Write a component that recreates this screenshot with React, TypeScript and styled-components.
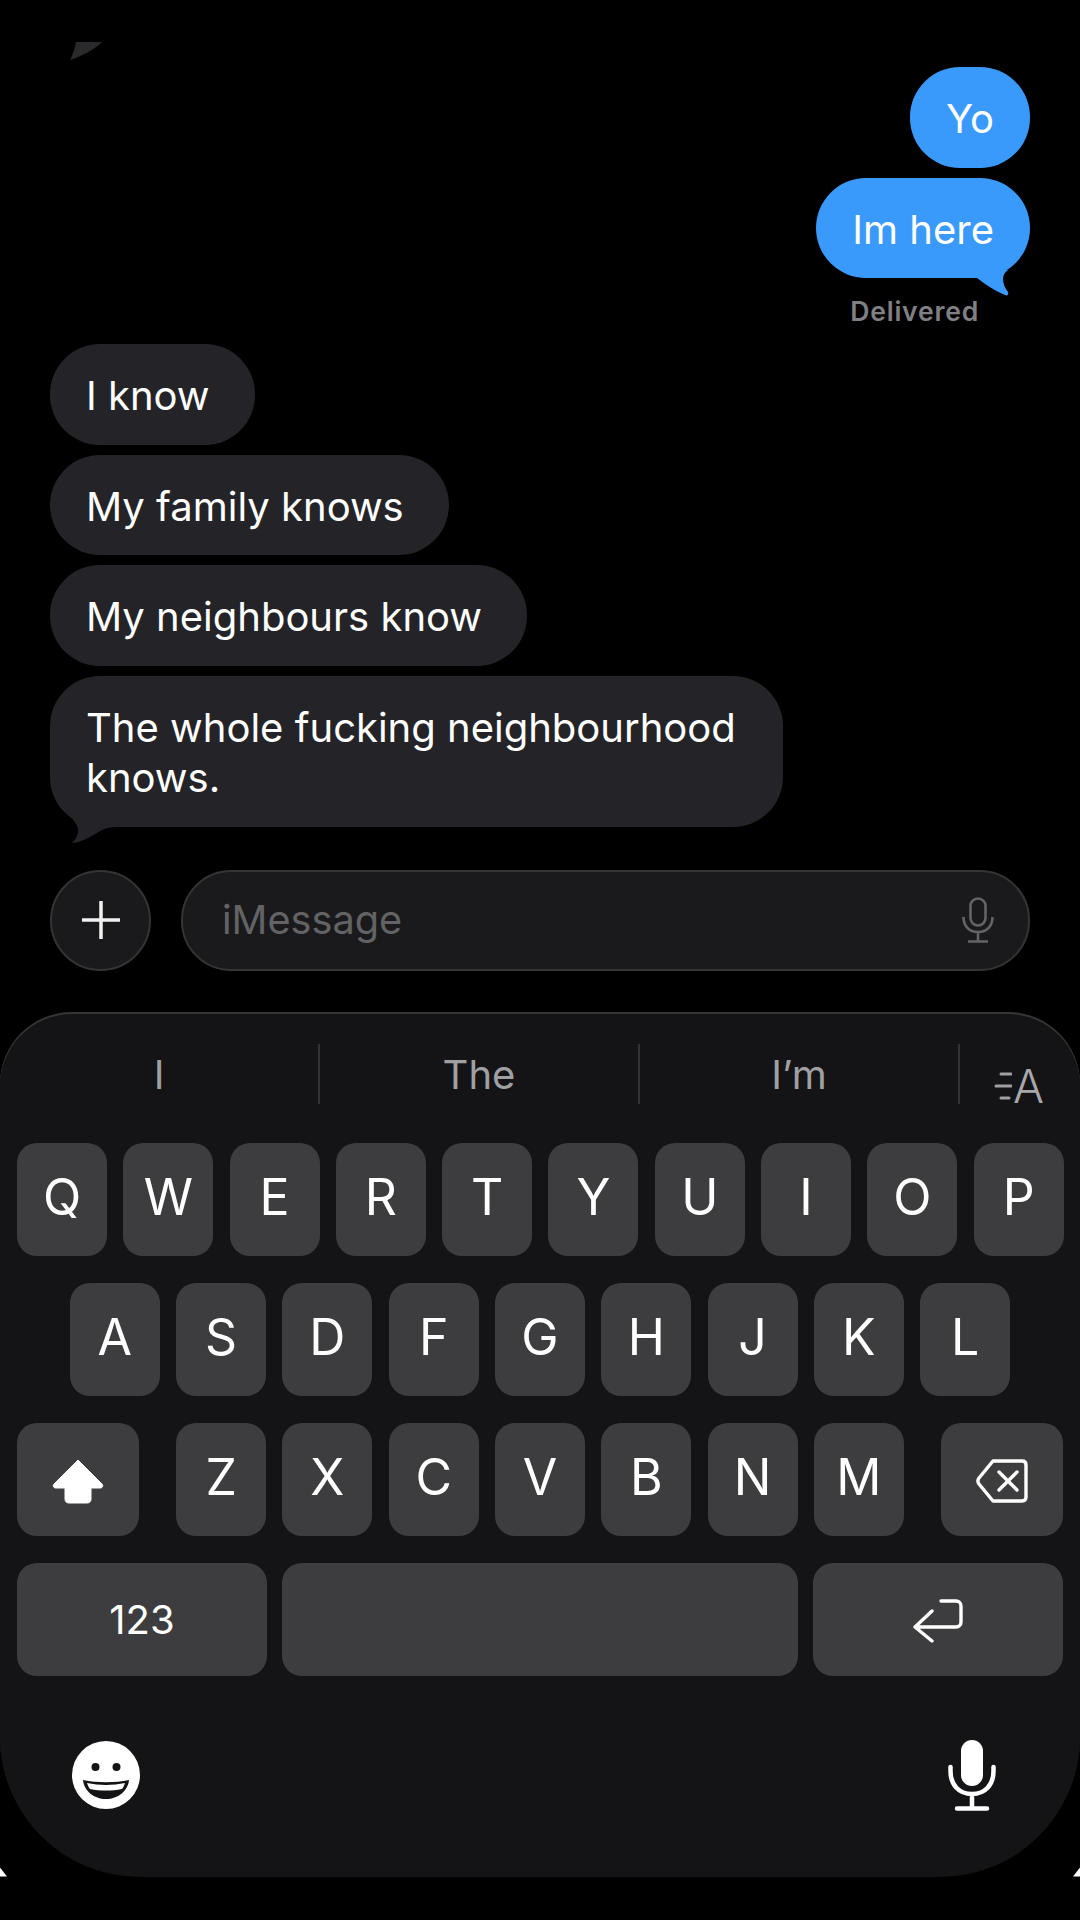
import styled, { createGlobalStyle } from "styled-components";

const GlobalStyle = createGlobalStyle`
  html, body {
    margin: 0;
    background: #000;
  }
  * {
    box-sizing: border-box;
  }
`;

const rows = ["QWERTYUIOP", "ASDFGHJKL", "ZXCVBNM"];

export default function App() {
  return (
    <>
      <GlobalStyle />
      <Screen>
        <CutOffTail viewBox="0 0 32 18">
          <path d="M6 0H32C24 8 10 15 0 18C3 12 5 6 6 0Z" fill="#2a2a2c" />
        </CutOffTail>
        <Thread>
          <Bubble $mine>Yo</Bubble>
          <Bubble $mine>
            Im here
            <MineTail viewBox="0 0 32 26">
              <path
                d="M0 8C8 14 18 21 28 25C30 26 32 25 31 22C28 18 26 14 26 9C26 5 28 2 31 0H0Z"
                fill="#3a9afc"
              />
            </MineTail>
          </Bubble>
          <Delivered>Delivered</Delivered>
          <Bubble>I know</Bubble>
          <Bubble>My family knows</Bubble>
          <Bubble>My neighbours know</Bubble>
          <Bubble>
            The whole fucking neighbourhood knows.
            <TheirTail viewBox="0 0 62 38">
              <path
                d="M12 9C17 15 21 20 20 25C19 30 17 33 14 36C22 36 32 30 44 23C50 20 56 20 62 20V0H12Z"
                fill="#242428"
              />
            </TheirTail>
          </Bubble>
        </Thread>

        <Composer>
          <PlusButton>
            <svg width="40" height="40" viewBox="0 0 40 40">
              <path d="M20 1V39M1 20H39" stroke="#f2f2f2" strokeWidth="3.5" />
            </svg>
          </PlusButton>
          <InputField>
            <Placeholder>iMessage</Placeholder>
            <svg width="32" height="46" viewBox="0 0 32 46" fill="none" stroke="#646466" strokeWidth="2.6">
              <rect x="8.5" y="1.5" width="15" height="27" rx="7.5" />
              <path d="M1.5 20C1.5 29 7 35 16 35S30.5 29 30.5 20M16 35V44M6 44.5H26" />
            </svg>
          </InputField>
        </Composer>

        <Keyboard>
          <Corner $side="left" />
          <Corner $side="right" />
          <Suggestions>
            <Suggestion>I</Suggestion>
            <Suggestion>The</Suggestion>
            <Suggestion>I’m</Suggestion>
            <TextStyle>
              <svg width="18" height="32" viewBox="0 0 18 32">
                <path
                  d="M7 4H17M2 16H17M7 28H15"
                  stroke="#a0a0a3"
                  strokeWidth="3"
                  strokeLinecap="round"
                />
              </svg>
              A
            </TextStyle>
          </Suggestions>
          <KeyRows>
            <KeyRow>
              {rows[0].split("").map((k) => (
                <Key key={k}>{k}</Key>
              ))}
            </KeyRow>
            <KeyRow $center>
              {rows[1].split("").map((k) => (
                <Key key={k}>{k}</Key>
              ))}
            </KeyRow>
            <KeyRow $between>
              <WideKey $width={122}>
                <svg width="52" height="46" viewBox="0 0 52 46">
                  <path
                    d="M26 2L50 26C51.500 28 50.500 30 48 30H39V41C39 43.500 37.500 45 35 45H17C14.500 45 13 43.500 13 41V30H4C1.500 30 .5 28 2 26Z"
                    fill="#fff"
                    stroke="#fff"
                    strokeLinejoin="round"
                  />
                </svg>
              </WideKey>
              <LetterGroup>
                {rows[2].split("").map((k) => (
                  <Key key={k}>{k}</Key>
                ))}
              </LetterGroup>
              <WideKey $width={122}>
                <svg width="52" height="44" viewBox="0 0 52 44" fill="none" stroke="#fff" strokeWidth="3.4" strokeLinejoin="round" strokeLinecap="round">
                  <path d="M17 2H46C48.500 2 50 3.500 50 6V38C50 40.500 48.500 42 46 42H17L3 25C1.500 23 1.500 21 3 19Z" />
                  <path d="M23 13L41 31M41 13L23 31" />
                </svg>
              </WideKey>
            </KeyRow>
            <KeyRow $wide>
              <WideKey $width={250} $text>
                123
              </WideKey>
              <SpaceKey />
              <WideKey $width={250}>
                <svg width="50" height="44" viewBox="0 0 50 44" fill="none" stroke="#fff" strokeWidth="3.4" strokeLinejoin="round" strokeLinecap="round">
                  <path d="M28 2H43C46 2 48 4 48 7V23C48 26 46 28 43 28H3M19 12L2 28L19 42" />
                </svg>
              </WideKey>
            </KeyRow>
          </KeyRows>
          <BottomBar>
            <svg width="68" height="68" viewBox="0 0 68 68">
              <circle cx="34" cy="34" r="34" fill="#fff" />
              <circle cx="23.500" cy="26" r="4" fill="#141416" />
              <circle cx="44.500" cy="26" r="4" fill="#141416" />
              <path d="M11 39C25 42 43 42 57 39C56 50 46 58 34 58S12 50 11 39Z" fill="#141416" />
              <path d="M15 42C27 44.500 41 44.500 53 42C52 45 51 47 50 48C40 50 28 50 18 48C17 47 16 45 15 42Z" fill="#fff" />
            </svg>
            <svg width="48" height="72" viewBox="0 0 48 72" fill="none">
              <rect x="13" y="1" width="22" height="46" rx="11" fill="#fff" />
              <path
                d="M2.500 28V32C2.500 46 11 55 24 55S45.500 46 45.500 32V28M24 55V68M9 69.500H39"
                stroke="#fff"
                strokeWidth="4.500"
                strokeLinecap="round"
              />
            </svg>
          </BottomBar>
        </Keyboard>
      </Screen>
    </>
  );
}

const Screen = styled.div`
  position: relative;
  width: 1080px;
  height: 1920px;
  background: #000;
  overflow: hidden;
  padding-top: 67px;
  font-family: Inter, Roboto, "Liberation Sans", sans-serif;
  color: #fff;
`;

const CutOffTail = styled.svg`
  position: absolute;
  left: 70px;
  top: 42px;
  width: 32px;
  height: 18px;
`;

const Thread = styled.div`
  display: flex;
  flex-direction: column;
  align-items: flex-start;
  gap: 10px;
  padding: 0 50px;
`;

const Bubble = styled.div<{ $mine?: boolean }>`
  position: relative;
  align-self: ${(p) => (p.$mine ? "flex-end" : "flex-start")};
  max-width: 733px;
  padding: 27px ${(p) => (p.$mine ? 36 : 45)}px 23px 36px;
  border-radius: 50px;
  background: ${(p) => (p.$mine ? "#3a9afc" : "#242428")};
  font-size: 40px;
  line-height: 50.5px;
`;

const MineTail = styled.svg`
  position: absolute;
  right: 21px;
  bottom: -18px;
  width: 32px;
  height: 26px;
`;

const TheirTail = styled.svg`
  position: absolute;
  left: 8px;
  bottom: -18px;
  width: 62px;
  height: 38px;
`;

const Delivered = styled.div`
  align-self: flex-end;
  height: 46px;
  margin-right: 51px;
  padding-top: 5px;
  font-size: 26.5px;
  line-height: 36px;
  font-weight: 600;
  letter-spacing: 0.8px;
  color: #808084;
`;

const Composer = styled.div`
  display: flex;
  gap: 30px;
  margin-top: 43px;
  padding: 0 50px;
`;

const PlusButton = styled.div`
  display: flex;
  flex: none;
  align-items: center;
  justify-content: center;
  width: 101px;
  height: 101px;
  border: 2px solid #343436;
  border-radius: 50%;
  background: #1a1a1c;
`;

const InputField = styled.div`
  display: flex;
  flex: 1;
  align-items: center;
  justify-content: space-between;
  height: 101px;
  padding: 0 34px 0 39px;
  border: 2px solid #343436;
  border-radius: 50px;
  background: #1a1a1c;
`;

const Placeholder = styled.span`
  font-size: 39.7px;
  color: #636366;
`;

const Keyboard = styled.div`
  position: relative;
  height: 865px;
  margin-top: 41px;
  padding-top: 32px;
  border-radius: 72px 72px 140px 140px;
  background: #141416;
  box-shadow: inset 0 2px 0 #363638;
`;

const Corner = styled.span<{ $side: "left" | "right" }>`
  position: absolute;
  bottom: 0;
  ${(p) => p.$side}: 0;
  width: 7px;
  height: 9px;
  background: #fff;
  clip-path: ${(p) =>
    p.$side === "left"
      ? "polygon(0 0, 100% 100%, 0 100%)"
      : "polygon(100% 0, 100% 100%, 0 100%)"};
`;

const Suggestions = styled.div`
  display: grid;
  grid-template-columns: 320px 320px 320px 1fr;
  height: 60px;
`;

const Suggestion = styled.div`
  display: flex;
  align-items: center;
  justify-content: center;
  padding-top: 2px;
  border-right: 2px solid #333335;
  font-size: 40px;
  color: #a0a0a3;
`;

const TextStyle = styled.div`
  display: flex;
  align-items: center;
  gap: 1px;
  padding: 24px 0 0 34px;
  font-size: 46px;
  font-weight: 300;
  line-height: 36px;
  color: #a8a8ab;
`;

const KeyRows = styled.div`
  display: flex;
  flex-direction: column;
  gap: 27px;
  margin-top: 39px;
  padding: 0 17px;
`;

const KeyRow = styled.div<{ $center?: boolean; $between?: boolean; $wide?: boolean }>`
  display: flex;
  gap: ${(p) => (p.$wide ? 15 : 16.3)}px;
  height: 113px;
  justify-content: ${(p) =>
    p.$center ? "center" : p.$between ? "space-between" : "flex-start"};
`;

const LetterGroup = styled.div`
  display: flex;
  gap: 16.3px;
`;

const Key = styled.div`
  display: flex;
  flex: none;
  align-items: center;
  justify-content: center;
  width: 90px;
  padding-bottom: 5px;
  border-radius: 20px;
  background: #3d3d3f;
  font-size: 50px;
  color: #fff;
`;

const WideKey = styled(Key)<{ $width: number; $text?: boolean }>`
  width: ${(p) => p.$width}px;
  padding: ${(p) => (p.$text ? 0 : "3px 0 0")};
  font-size: ${(p) => (p.$text ? 40 : 50)}px;
`;

const SpaceKey = styled(Key)`
  flex: 1;
`;

const BottomBar = styled.div`
  display: flex;
  align-items: center;
  justify-content: space-between;
  height: 72px;
  margin-top: 63px;
  padding: 0 84px 0 72px;
`;
